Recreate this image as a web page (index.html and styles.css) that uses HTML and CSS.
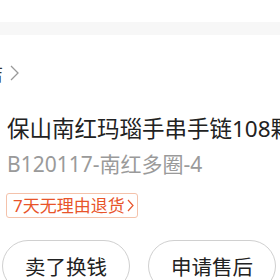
FILE: index.html
```html
<!DOCTYPE html>
<html lang="zh-CN">
<head>
<meta charset="utf-8">
<link rel="stylesheet" href="styles.css">
</head>
<body>
<div class="page">
  <div class="top"></div>
  <div class="band"></div>
  <div class="shop">
    <span class="shop-name">店</span>
    <svg class="chev" width="9" height="16" viewBox="0 0 9 16"><polyline points="1,1 8,8 1,15" fill="none" stroke="#999" stroke-width="1.3"/></svg>
  </div>
  <div class="title">保山南红玛瑙手串手链108颗</div>
  <div class="sub">B120117-南红多圈-4</div>
  <div class="tag-row"><span class="tag">7天无理由退货<svg class="tag-chev" width="7" height="13" viewBox="0 0 7 13"><polyline points="1,1 6,6.5 1,12" fill="none" stroke="#e8542a" stroke-width="1.2"/></svg></span></div>
  <div class="actions">
    <div class="btn">卖了换钱</div>
    <div class="btn">申请售后</div>
  </div>
</div>
</body>
</html>
```
FILE: styles.css
```css
html, body {
  margin: 0;
  padding: 0;
  background: #fff;
}
body {
  width: 280px;
  height: 280px;
  overflow: hidden;
  font-family: "Noto Sans", "Noto Sans CJK SC", sans-serif;
}
.page {
  width: 280px;
}
.top {
  height: 22px;
  background: #fff;
}
.band {
  height: 13px;
  background: #f7f7f7;
}
.shop {
  display: flex;
  align-items: center;
  height: 78px;
  margin-left: -15px;
  gap: 7px;
}
.shop-name {
  font-size: 18px;
  color: #333;
  line-height: 20px;
}
.chev {
  display: block;
  margin-top: -3px;
}
.title {
  margin: 0 0 0 7px;
  font-size: 22.5px;
  line-height: 32px;
  color: #222;
  white-space: nowrap;
}
.sub {
  margin: 4px 0 0 7px;
  font-size: 21px;
  line-height: 30px;
  color: #9a9a9a;
  white-space: nowrap;
}
.tag-row {
  margin: 14px 0 0 6px;
  display: flex;
}
.tag {
  display: inline-flex;
  align-items: center;
  gap: 2px;
  height: 23px;
  padding: 0 3px 0 6px;
  border: 1px solid #f4c2ab;
  border-radius: 3px;
  font-size: 17px;
  line-height: 23px;
  color: #e8542a;
}
.actions {
  display: flex;
  gap: 18px;
  margin: 22px 0 0 2px;
}
.btn {
  width: 126px;
  height: 50px;
  border: 1px solid #d0d0d0;
  border-radius: 26px;
  display: flex;
  align-items: center;
  justify-content: center;
  font-size: 20.5px;
  color: #222;
}
```
